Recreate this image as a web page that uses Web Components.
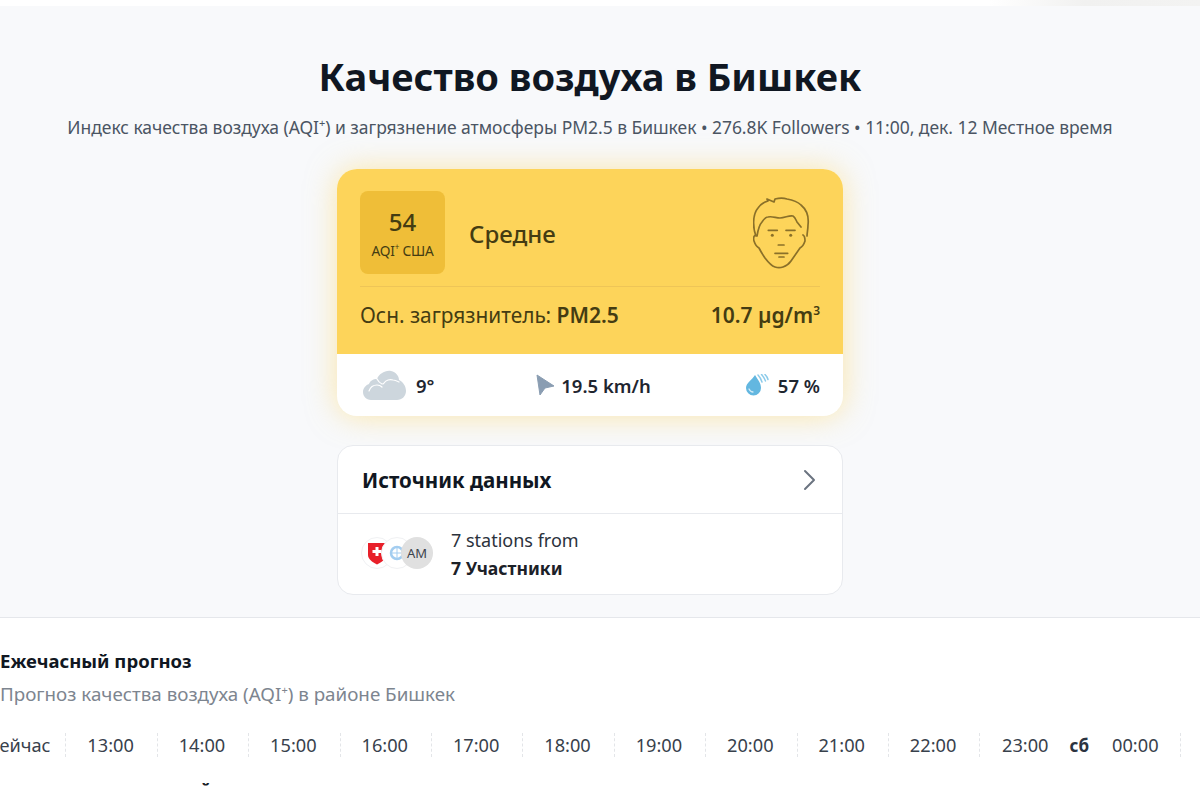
<!DOCTYPE html>
<html lang="ru">
<head>
<meta charset="utf-8">
<title>Качество воздуха в Бишкек</title>
<style>
    html, body{ margin: 0; height: 100%; overflow: hidden; }
    body{ font-family: "Noto Sans", "Liberation Sans", sans-serif; background: #fff; color: #1c2128; }
    #page{ height: 787px; overflow: hidden; }
</style>
</head>
<body>
<div id="page">
    <air-summary></air-summary>
    <hourly-forecast></hourly-forecast>
</div>

<template id="summary-tpl">
    <style>
        :host{
            display: block;
            height: 611px;
            margin-top: 6px;
            background: #f8f9fb;
            border-bottom: 1px solid #e5e7eb;
            position: relative;
        }
        :host::before{
            content: "";
            position: absolute;
            right: 0;
            top: -6px;
            width: 210px;
            height: 6px;
            background: linear-gradient(90deg, #fff 0%, #f1f1f0 45%, #f3f3f2 100%);
        }
        main{
            width: 1180px;
            display: flex;
            flex-direction: column;
            align-items: center;
        }
        h1{
            margin: 45px 0 0;
            font-size: 38px;
            line-height: 50px;
            font-weight: 700;
            color: #101722;
            white-space: nowrap;
        }
        p{
            margin: 15px 0 0;
            font-size: 17.5px;
            line-height: 22px;
            letter-spacing: -0.04px;
            color: #4b5563;
            white-space: nowrap;
        }
        sup{ font-size: 11px; line-height: 0; }
        aqi-card{ margin-top: 31px; }
        source-card{ margin-top: 29px; }
    </style>
    <main>
        <h1>Качество воздуха в Бишкек</h1>
        <p>Индекс качества воздуха (AQI<sup>+</sup>) и загрязнение атмосферы PM2.5 в Бишкек • 276.8K Followers • 11:00, дек. 12 Местное время</p>
        <aqi-card></aqi-card>
        <source-card></source-card>
    </main>
</template>

<template id="card-tpl">
    <style>
        :host{
            display: block;
            width: 506px;
            height: 247px;
            border-radius: 20px;
            background: #fff;
            box-shadow: 0 0 30px rgba(253, 212, 90, 0.5);
            color: #1c2128;
        }
        .top{
            box-sizing: border-box;
            height: 185px;
            padding: 22px 23px 0;
            background: #fdd45a;
            border-radius: 20px 20px 0 0;
            color: #443c12;
        }
        .head{
            display: flex;
            align-items: center;
            height: 95px;
            border-bottom: 1px solid #eec557;
        }
        .badge{
            width: 85px;
            height: 83px;
            margin-bottom: 12px;
            border-radius: 8px;
            background: #efbe38;
            display: flex;
            flex-direction: column;
            align-items: center;
        }
        .num{ font-size: 24px; line-height: 32px; margin-top: 15px; font-weight: 500; }
        .unit{ font-size: 13.7px; line-height: 16px; margin-top: 5px; letter-spacing: -0.2px; white-space: nowrap; }
        .unit sup{ font-size: 8px; line-height: 0; }
        .level{ margin: 0 0 10px 24px; font-size: 24px; line-height: 32px; font-weight: 500; flex: 1; }
        .face{ margin: 0 10px 11px 0; display: block; }
        .pollutant{
            display: flex;
            justify-content: space-between;
            align-items: center;
            font-size: 20.85px;
            line-height: 26px;
            margin-top: 15px;
        }
        b{ font-weight: 600; font-size: 21px; }
        .pollutant sup{ font-size: 12px; line-height: 0; }
        .weather{
            display: grid;
            grid-template-columns: 1fr 1fr 1fr;
            align-items: center;
            height: 62px;
            padding: 0 23px 0 26px;
            font-size: 18.5px;
            font-weight: 600;
            color: #1f2630;
        }
        .weather div{ display: flex; align-items: center; }
        .w1{ gap: 10px; }
        .w2{ gap: 7px; justify-content: center; padding-left: 4px; }
        .w3{ gap: 9px; justify-content: flex-end; }
    </style>
    <div class="top">
        <div class="head">
            <div class="badge">
                <span class="num">54</span>
                <span class="unit">AQI<sup>+</sup> США</span>
            </div>
            <span class="level">Средне</span>
            <svg class="face" width="57" height="73" viewBox="0 0 57 73" fill="none" stroke="#8a7029" stroke-width="1.7" stroke-linecap="round" stroke-linejoin="round">
                <path d="M3 39C0 32-1 18 5 11c3-4 6-6 10-7l-1-2 7 3 1-3c4-1 9-1 12 0 6 1 11 3 14 6 6 5 8 12 7 20 0 4-1 8-1 11"/>
                <path d="M4 39c1-6 2-11 5-14 2-3 4-5 6-5 4-1 8 1 12 1 5 0 9-3 13-2 2 1 3 4 4 6l4 5"/>
                <path d="M3 38c-2 0-3 3-2 6 1 3 3 6 5 7 2 4 4 7 6 10 3 4 7 8 10 9 3 1 5 1 8 0 3-1 6-3 8-6l9-13c2-1 4-4 5-7 0-3 0-5-2-6"/>
                <path d="M15.300 33.300h9M33 33.300h9M25.300 48H31M22 56.300h12.700M26 60h5"/>
                <circle cx="19.300" cy="38.300" r="1.500" fill="#8a7029" stroke="none"/>
                <circle cx="37.700" cy="38.300" r="1.500" fill="#8a7029" stroke="none"/>
            </svg>
        </div>
        <div class="pollutant">
            <span>Осн. загрязнитель: <b>PM2.5</b></span>
            <b>10.7 µg/m<sup>3</sup></b>
        </div>
    </div>
    <div class="weather">
        <div class="w1">
            <svg width="43" height="30" viewBox="0 0 43 30">
                <path d="M8 30C3 30 0 26 0 22c0-4 3-7 6-8 1-3 4-5 8-5 2-5 8-9 14-8 5 1 8 5 8 9 4 2 7 6 7 11 0 5-4 9-9 9z" fill="#cdd6dd"/>
                <path d="M6 21c1-3 4-6 8-6 2 0 4 1 5 2M14 9c1 2 3 4 5 5 1 0 2 0 2-1 2-3 6-4 9-3 2 0 4 1 6 2" fill="none" stroke="#fff" stroke-width="1.200" stroke-linecap="round"/>
            </svg>
            <span>9°</span>
        </div>
        <div class="w2">
            <svg width="18" height="22" viewBox="0 0 18 22"><path d="M1 1l17 11-9 2-5 7z" fill="#8a9db2" stroke="#8a9db2" stroke-linejoin="round"/></svg>
            <span>19.5 km/h</span>
        </div>
        <div class="w3">
            <svg width="24" height="22" viewBox="0 0 24 22">
                <path d="M10 1c3 5 6 8 6 13a7.500 7.500 0 0 1-15 0C1 9 7 6 10 1z" fill="#63b7e0"/>
                <path d="M4 15c1 2 2 3 4 3" fill="none" stroke="#d3ebf7" stroke-width="1.300" stroke-linecap="round"/>
                <path d="M13 1c2 2 3 4 4 7M16.500 0.500c2 2 3 4 4 6.500M20 0.500c1.500 1.500 2.500 3 3 5" fill="none" stroke="#8ccbea" stroke-width="1.500" stroke-linecap="round"/>
            </svg>
            <span>57 %</span>
        </div>
    </div>
</template>

<template id="source-tpl">
    <style>
        :host{
            display: block;
            box-sizing: border-box;
            width: 506px;
            height: 150px;
            border: 1px solid #e8eaee;
            border-radius: 16px;
            background: #fff;
        }
        .title{
            display: flex;
            align-items: center;
            justify-content: space-between;
            height: 67px;
            padding: 0 26px 0 24px;
            border-bottom: 1px solid #e8eaee;
            font-size: 20.5px;
            font-weight: 700;
            color: #101722;
        }
        .body{
            display: flex;
            align-items: center;
            height: 80px;
            padding-left: 23px;
        }
        .logos{ display: flex; width: 90px; flex: none; margin-top: -2px; }
        .logo{
            box-sizing: border-box;
            width: 32px;
            height: 32px;
            border-radius: 50%;
            background: #fff;
            border: 1px solid #f0f1f3;
            display: flex;
            align-items: center;
            justify-content: center;
            margin-right: -12px;
            flex: none;
        }
        .logo.am{ background: #e0e0e0; border: none; font-size: 13px; color: #3c434d; }
        .txt{ font-size: 18px; line-height: 28px; color: #2b323c; }
        .txt b{ display: block; font-weight: 700; font-size: 17.6px; color: #1c2128; }
    </style>
    <div class="title">
        <span>Источник данных</span>
        <svg width="14" height="22" viewBox="0 0 14 22" fill="none" stroke="#6b7480" stroke-width="2" stroke-linecap="round" stroke-linejoin="round"><path d="M3 2l9 9-9 9"/></svg>
    </div>
    <div class="body">
        <div class="logos">
            <span class="logo">
                <svg width="18" height="23" viewBox="0 0 18 23"><path d="M0 1h18v12c0 4-4 7-9 9.500C4 20 0 17 0 13z" fill="#e8202a"/><path d="M7.500 5h3v3h3v3h-3v3h-3v-3h-3V8h3z" fill="#fff"/></svg>
            </span>
            <span class="logo">
                <svg width="18" height="18" viewBox="0 0 18 18" fill="none" stroke="#a3cdf0" stroke-width="2.500"><circle cx="9" cy="9" r="6"/><path d="M9 3v12M3 9h12" stroke-width="1"/></svg>
            </span>
            <span class="logo am">AM</span>
        </div>
        <div class="txt">7 stations from<b>7 Участники</b></div>
    </div>
</template>

<template id="hourly-tpl">
    <style>
        :host{
            display: block;
            background: #fff;
            height: 170px;
            overflow: hidden;
        }
        h2{
            margin: 31px 0 0;
            font-size: 18.5px;
            line-height: 24px;
            font-weight: 700;
            color: #101722;
            white-space: nowrap;
        }
        p{
            margin: 9px 0 0;
            font-size: 18.8px;
            line-height: 24px;
            color: #7d858f;
            white-space: nowrap;
        }
        sup{ font-size: 11px; line-height: 0; }
        .hours{
            display: flex;
            margin: 27px 0 0 -25px;
            height: 24px;
            align-items: center;
        }
        .more{
            margin: 22px 0 0 200px;
            font-size: 17px;
            line-height: 24px;
            font-weight: 700;
        }
    </style>
    <h2>Ежечасный прогноз</h2>
    <p>Прогноз качества воздуха (AQI<sup>+</sup>) в районе Бишкек</p>
    <div class="hours">
        <hour-cell>Сейчас</hour-cell>
        <hour-cell>13:00</hour-cell>
        <hour-cell>14:00</hour-cell>
        <hour-cell>15:00</hour-cell>
        <hour-cell>16:00</hour-cell>
        <hour-cell>17:00</hour-cell>
        <hour-cell>18:00</hour-cell>
        <hour-cell>19:00</hour-cell>
        <hour-cell>20:00</hour-cell>
        <hour-cell>21:00</hour-cell>
        <hour-cell>22:00</hour-cell>
        <hour-cell wide><span>23:00</span><b>сб</b><span>00:00</span></hour-cell>
    </div>
    <div class="more">й</div>
</template>

<template id="hour-tpl">
    <style>
        :host{
            display: flex;
            align-items: center;
            justify-content: center;
            gap: 21px;
            box-sizing: border-box;
            width: 91.4px;
            height: 24px;
            padding-right: 2px;
            flex: none;
            font-size: 18.2px;
            color: #38414c;
            border-right: 1px dashed #e3e5e8;
            white-space: nowrap;
        }
        :host([wide]){ width: 201px; padding-right: 0; }
        ::slotted(b){ color: #2b3340; font-size: 17px; font-weight: 700; margin-right: 2px; }
    </style>
    <slot></slot>
</template>

<script>
    function stamp(host, id){
        const root = host.attachShadow({ mode: 'open' });
        root.appendChild(document.getElementById(id).content.cloneNode(true));
    }

    class AirSummary extends HTMLElement{
        constructor(){ super(); stamp(this, 'summary-tpl'); }
    }
    class AqiCard extends HTMLElement{
        constructor(){ super(); stamp(this, 'card-tpl'); }
    }
    class SourceCard extends HTMLElement{
        constructor(){ super(); stamp(this, 'source-tpl'); }
    }
    class HourCell extends HTMLElement{
        constructor(){ super(); stamp(this, 'hour-tpl'); }
    }
    class HourlyForecast extends HTMLElement{
        constructor(){ super(); stamp(this, 'hourly-tpl'); }
    }

    customElements.define('aqi-card', AqiCard);
    customElements.define('source-card', SourceCard);
    customElements.define('air-summary', AirSummary);
    customElements.define('hour-cell', HourCell);
    customElements.define('hourly-forecast', HourlyForecast);
</script>
</body>
</html>
